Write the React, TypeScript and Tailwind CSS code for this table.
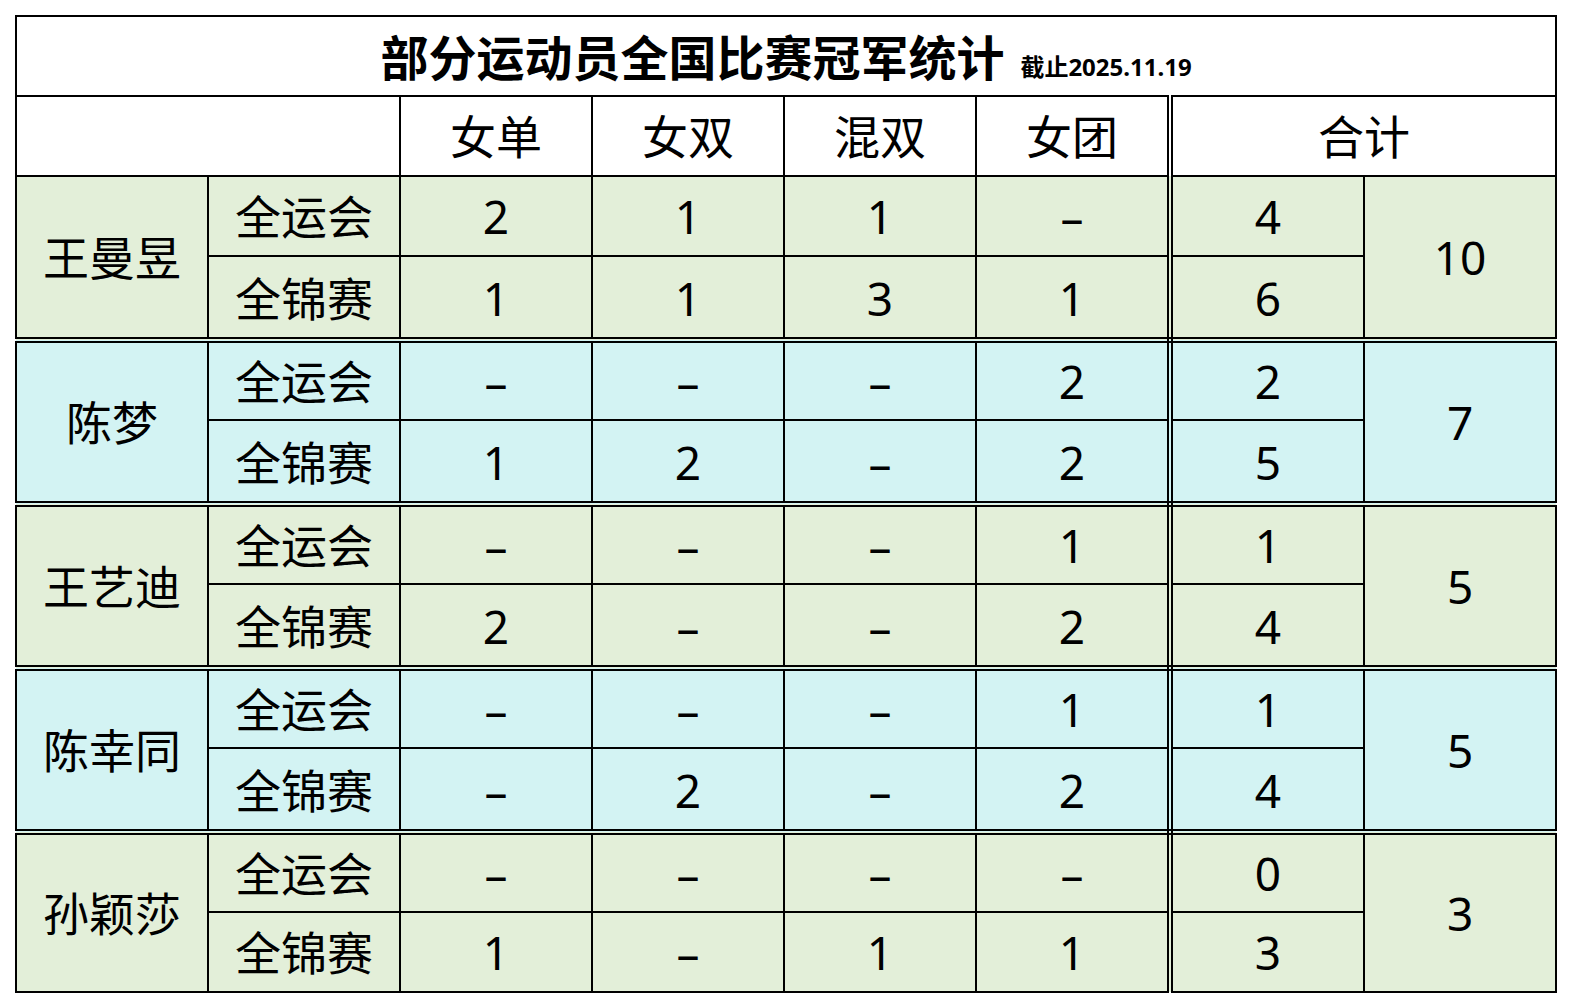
import React from "react";

type Player = {
  name: string;
  bg: string;
  games: string[];
  champs: string[];
  total: string;
};

const players: Player[] = [
  { name: "王曼昱", bg: "bg-[#e3efd9]", games: ["2", "1", "1", "–", "4"], champs: ["1", "1", "3", "1", "6"], total: "10" },
  { name: "陈梦", bg: "bg-[#d3f3f3]", games: ["–", "–", "–", "2", "2"], champs: ["1", "2", "–", "2", "5"], total: "7" },
  { name: "王艺迪", bg: "bg-[#e3efd9]", games: ["–", "–", "–", "1", "1"], champs: ["2", "–", "–", "2", "4"], total: "5" },
  { name: "陈幸同", bg: "bg-[#d3f3f3]", games: ["–", "–", "–", "1", "1"], champs: ["–", "2", "–", "2", "4"], total: "5" },
  { name: "孙颖莎", bg: "bg-[#e3efd9]", games: ["–", "–", "–", "–", "0"], champs: ["1", "–", "1", "1", "3"], total: "3" },
];

const base = "border-2 border-black text-center align-middle p-0 text-[46px] leading-none";
const cell = `${base} h-[80px]`;
const dbl = "border-r-[6px] [border-right-style:double]";
const dblBottom = "border-b-[6px] [border-bottom-style:double]";

export default function App() {
  return (
    <div
      className="w-[1572px] h-[1008px] bg-white text-black pt-[15px] pl-[15px]"
      style={{ fontFamily: '"Noto Sans", "Noto Sans CJK SC", sans-serif' }}
    >
      <table className="border-collapse table-fixed w-[1542px]">
        <colgroup>
          <col className="w-[192px]" />
          <col className="w-[192px]" />
          <col className="w-[192px]" />
          <col className="w-[192px]" />
          <col className="w-[192px]" />
          <col className="w-[194px]" />
          <col className="w-[194px]" />
          <col className="w-[192px]" />
        </colgroup>
        <tbody>
          <tr>
            <td colSpan={8} className="border-2 border-black h-[80px] p-0 text-center align-middle">
              <span className="inline-flex items-baseline gap-[16px] pt-[4px]">
                <span className="text-[48px] font-bold leading-none">部分运动员全国比赛冠军统计</span>
                <span className="text-[24px] font-bold leading-none">截止2025.11.19</span>
              </span>
            </td>
          </tr>
          <tr>
            <td colSpan={2} className={cell}></td>
            <td className={cell}>女单</td>
            <td className={cell}>女双</td>
            <td className={cell}>混双</td>
            <td className={`${cell} ${dbl}`}>女团</td>
            <td colSpan={2} className={cell}>合计</td>
          </tr>
          {players.map((p, i) => {
            const last = i === players.length - 1;
            const bottom = last ? "" : dblBottom;
            const lower = last ? "h-[80px]" : "h-[84px] pt-[2px]";
            return (
              <React.Fragment key={p.name}>
                <tr className={p.bg}>
                  <td rowSpan={2} className={`${cell} ${bottom}`}>{p.name}</td>
                  <td className={cell}>全运会</td>
                  {p.games.map((v, j) => (
                    <td key={j} className={`${cell} ${j === 3 ? dbl : ""}`}>{v}</td>
                  ))}
                  <td rowSpan={2} className={`${cell} ${bottom}`}>{p.total}</td>
                </tr>
                <tr className={p.bg}>
                  <td className={`${base} ${lower} ${bottom}`}>全锦赛</td>
                  {p.champs.map((v, j) => (
                    <td key={j} className={`${base} ${lower} ${bottom} ${j === 3 ? dbl : ""}`}>{v}</td>
                  ))}
                </tr>
              </React.Fragment>
            );
          })}
        </tbody>
      </table>
    </div>
  );
}
